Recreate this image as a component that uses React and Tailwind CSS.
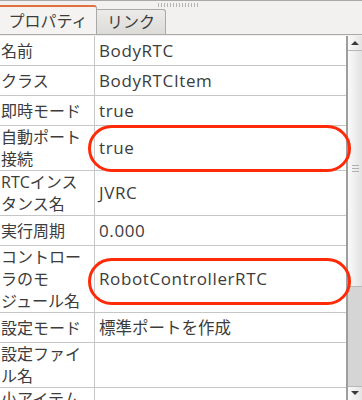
import React from "react";

const rows = [
  { label: ["名前"], value: "BodyRTC", latin: true, h: "h-[30px]" },
  { label: ["クラス"], value: "BodyRTCItem", latin: true, h: "h-[30px]" },
  { label: ["即時モード"], value: "true", latin: true, h: "h-[30px]" },
  { label: ["自動ポート", "接続"], value: "true", latin: true, h: "h-[45px]" },
  { label: ["RTCインス", "タンス名"], value: "JVRC", latin: true, h: "h-[45px]" },
  { label: ["実行周期"], value: "0.000", latin: true, h: "h-[30px]" },
  { label: ["コントロー", "ラのモ", "ジュール名"], value: "RobotControllerRTC", latin: true, h: "h-[67px]" },
  { label: ["設定モード"], value: "標準ポートを作成", h: "h-[30px]" },
  { label: ["設定ファイ", "ル名"], value: "", h: "h-[45px]" },
  { label: ["小アイテム", "名"], value: "", h: "h-[45px]" },
];

function Grip() {
  return (
    <div className="flex gap-[2px] h-[4px]">
      {Array.from({ length: 14 }).map((_, i) => (
        <div key={i} className="w-px h-full bg-[#b4b4b4]" />
      ))}
    </div>
  );
}

function Scrollbar() {
  return (
    <div className="w-[15px] flex flex-col bg-[#d5d5d5] border-l border-[#9e9e9e]">
      <div className="h-[15px] flex items-center justify-center bg-gradient-to-r from-[#fafafa] to-[#e4e4e4] border-b border-[#b8b8b8]">
        <div className="w-0 h-0 border-l-[4px] border-r-[4px] border-b-[4px] border-l-transparent border-r-transparent border-b-[#3a3a3a]" />
      </div>
      <div className="h-[236px] flex flex-col items-center justify-center gap-[2px] bg-gradient-to-r from-[#fafafa] to-[#e2e2e2] border-b border-[#b8b8b8]">
        <div className="w-[7px] h-px bg-[#b0b0b0]" />
        <div className="w-[7px] h-px bg-[#b0b0b0]" />
        <div className="w-[7px] h-px bg-[#b0b0b0]" />
      </div>
      <div className="flex-1" />
      <div className="h-[15px] flex items-start pt-[4px] justify-center bg-gradient-to-r from-[#fafafa] to-[#e4e4e4] border-t border-[#b8b8b8]">
        <div className="w-0 h-0 border-l-[4px] border-r-[4px] border-t-[4px] border-l-transparent border-r-transparent border-t-[#3a3a3a]" />
      </div>
    </div>
  );
}

export default function App() {
  return (
    <div
      className="relative w-[362px] h-[400px] overflow-hidden bg-[#f2f1f0] border-t border-[#a9a9a9] text-[#3c3c3c]"
      style={{ fontFamily: '"Open Sans", "Noto Sans CJK JP", sans-serif' }}
    >
      {/* tab bar */}
      <div className="relative h-[34px] flex items-end border-b border-[#a9a9a9]">
        <div className="absolute left-[158px] top-[2px]">
          <Grip />
        </div>
        <div className="w-[97px] h-[29px] flex items-center justify-center bg-[#f4f3f2] border-t-2 border-r border-t-[#e2703e] border-r-[#a9a9a9] rounded-tr-[3px] text-[16px] leading-none">
          プロパティ
        </div>
        <div className="w-[69px] h-[25px] flex items-center justify-center bg-gradient-to-b from-[#ecebe9] to-[#dcdbd8] border-t border-r border-[#a9a9a9] rounded-tr-[3px] text-[16px] leading-none">
          リンク
        </div>
      </div>

      {/* table + scrollbar */}
      <div className="flex h-[366px] pt-px">
        <div className="flex-1 bg-white border-r border-[#9e9e9e]">
          {rows.map((r) => (
            <div key={r.label.join("")} className={`flex ${r.h} border-b border-[#c6c6c6]`}>
              <div className="w-[95px] shrink-0 flex flex-col justify-center pl-[1px] border-r border-[#c6c6c6] text-[16px] leading-[22px] whitespace-nowrap">
                {r.label.map((l) => (
                  <span key={l}>{l}</span>
                ))}
              </div>
              <div
                className={`flex-1 flex items-center pl-[4px] leading-[22px] whitespace-nowrap ${
                  r.latin ? "text-[17px] tracking-[0.6px]" : "text-[16.5px]"
                }`}
              >
                {r.value}
              </div>
            </div>
          ))}
        </div>
        <Scrollbar />
      </div>

      {/* highlight marks */}
      <div className="absolute left-[88px] top-[124px] w-[263px] h-[47px] rounded-full border-[3px] border-[#ff2a08]" />
      <div className="absolute left-[88px] top-[257px] w-[263px] h-[47px] rounded-full border-[3px] border-[#ff2a08]" />
    </div>
  );
}
